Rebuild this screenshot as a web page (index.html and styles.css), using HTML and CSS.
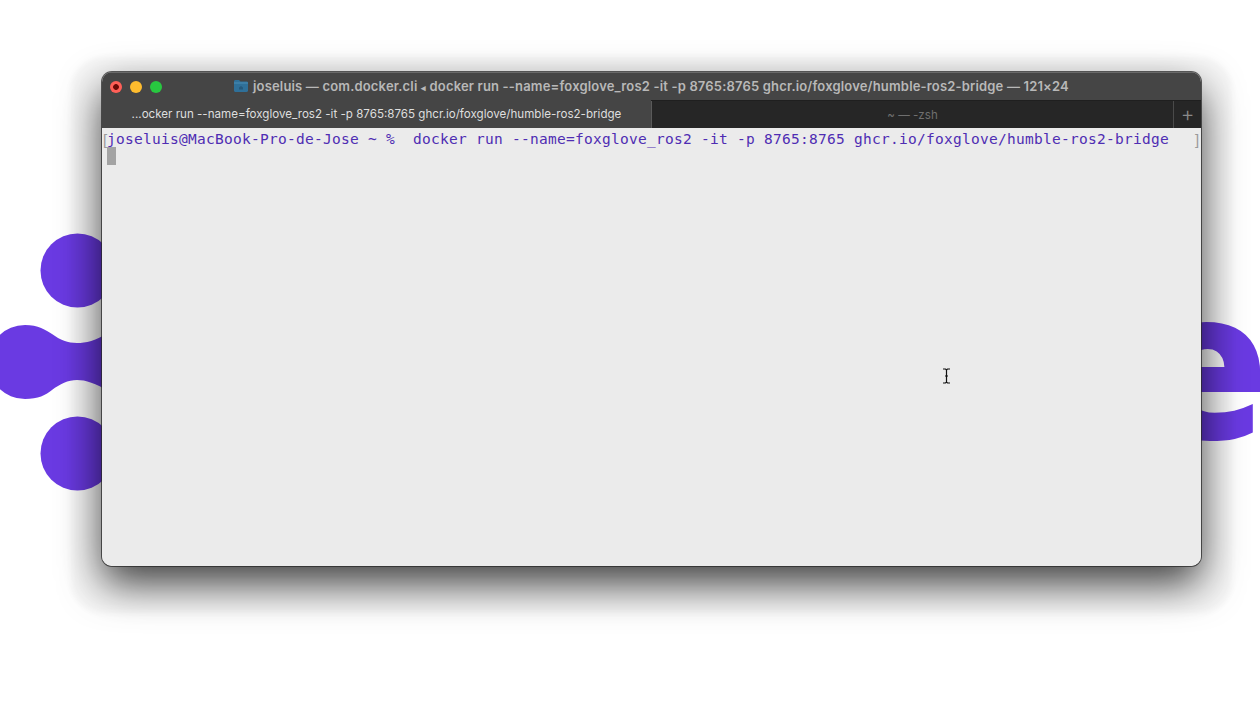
FILE: index.html
```html
<!DOCTYPE html>
<html lang="en">
<head>
<meta charset="utf-8">
<title>Terminal</title>
<link rel="stylesheet" href="styles.css">
</head>
<body>
<main class="stage">
  <svg class="logo-mark" width="110" height="720" viewBox="0 0 110 720" aria-hidden="true">
    <circle cx="77.500" cy="270.500" r="37"/>
    <circle cx="77.500" cy="453.500" r="37"/>
    <path d="M25 325C38 325 46 330 52 334C60 340 68 343 77 343C86 343 95 341 110 332V392C95 383 86 380 77 380C68 380 60 384 52 390C46 395 38 399 25 399A37 37 0 0 1 25 325Z"/>
  </svg>
  <div class="wordmark">foxglove</div>
  <section class="window">
    <header class="titlebar">
      <div class="lights">
        <span class="light light-close"></span>
        <span class="light light-min"></span>
        <span class="light light-max"></span>
      </div>
      <div class="title">
        <svg class="folder" width="16" height="14" viewBox="0 0 16 14" aria-hidden="true">
          <path d="M1 2.500C1 1.700 1.600 1 2.400 1H6L7.500 2.500H13.600C14.400 2.500 15 3.100 15 3.900V11.800C15 12.500 14.400 13 13.600 13H2.400C1.600 13 1 12.500 1 11.800Z" fill="#2f7099"/>
          <path d="M1 4H15" stroke="#4a8db5" stroke-width="1"/>
          <path d="M6 10.500V8.500L8 7L10 8.500V10.500Z" fill="#25597c"/>
        </svg>
        <span>joseluis — com.docker.cli <span class="tri">◂</span> docker run --name=foxglove_ros2 -it -p 8765:8765 ghcr.io/foxglove/humble-ros2-bridge — 121×24</span>
      </div>
    </header>
    <nav class="tabs">
      <div class="tab tab-active">...ocker run --name=foxglove_ros2 -it -p 8765:8765 ghcr.io/foxglove/humble-ros2-bridge</div>
      <div class="tab tab-idle">~ — -zsh</div>
      <div class="tab-add">+</div>
    </nav>
    <div class="terminal">
      <div class="row"><span class="mark">[</span><span class="command">joseluis@MacBook-Pro-de-Jose ~ %  docker run --name=foxglove_ros2 -it -p 8765:8765 ghcr.io/foxglove/humble-ros2-bridge</span><span class="mark mark-end">]</span></div>
      <div class="row"><span class="cursor"></span></div>
      <svg class="ibeam" width="9" height="16" viewBox="0 0 9 16" aria-hidden="true">
        <path d="M1 1H3.500L4.500 2L5.500 1H8M4.500 2V14M1 15H3.500L4.500 14L5.500 15H8M3 8H6" fill="none" stroke="#111" stroke-width="1.200"/>
      </svg>
    </div>
  </section>
</main>
</body>
</html>
```
FILE: styles.css
```css
* { box-sizing: border-box; }
html, body { margin: 0; height: 100%; background: #fff; }
.stage {
  position: relative;
  width: 1260px;
  height: 720px;
  overflow: hidden;
  padding: 72px 59px 0 102px;
}
.logo-mark { position: absolute; left: 0; top: 0; fill: #6a3ae2; }
.wordmark {
  position: absolute;
  right: 0;
  top: 256px;
  font: 800 207px/1 "Open Sans", "Liberation Sans", sans-serif;
  letter-spacing: -9px;
  color: #6a3ae2;
  white-space: nowrap;
}
.window {
  position: relative;
  width: 1099px;
  height: 494px;
  border-radius: 10px;
  overflow: hidden;
  box-shadow: 0 0 0 1px rgba(40,40,40,.75), 0 18px 42px rgba(0,0,0,.75), 0 16px 6px 31px rgba(0,0,0,.035);
  display: flex;
  flex-direction: column;
  font-family: Inter, "Liberation Sans", Arial, sans-serif;
}
.titlebar {
  height: 28px;
  flex: none;
  background: #454545;
  border-top: 1px solid #6a6a6a;
  display: flex;
  align-items: center;
  position: relative;
}
.lights { display: flex; gap: 8px; padding-left: 8px; }
.light { width: 12px; height: 12px; border-radius: 50%; }
.light-close { background: radial-gradient(circle, #6a0a06 0 2.500px, #ff5f57 3.200px); }
.light-min { background: #febc2e; }
.light-max { background: #28c840; }
.title {
  position: absolute;
  left: 131px;
  top: 0;
  bottom: 2px;
  display: flex;
  align-items: center;
  gap: 4px;
  font-size: 13px;
  font-weight: 600;
  letter-spacing: .17px;
  color: #b8b8b8;
  white-space: nowrap;
}
.tri { font-size: 9px; }
.tabs {
  height: 28px;
  flex: none;
  display: flex;
  font-size: 11.600px;
  white-space: nowrap;
  background: #262626;
  border-top: 1px solid #1f1f1f;
}
.tab { display: flex; align-items: center; justify-content: center; }
.tab-active {
  width: 549px;
  background: #454545;
  color: #dedede;
  margin-top: -1px;
}
.tab-idle {
  width: 522px;
  color: #6f6f6f;
  border-left: 1px solid #5a5a5a;
}
.tab-add {
  width: 28px;
  padding-bottom: 2px;
  border-left: 1px solid #4a4a4a;
  color: #8a8a8a;
  font-size: 21px;
  font-weight: 300;
  display: flex;
  align-items: center;
  justify-content: center;
}
.terminal {
  flex: 1;
  position: relative;
  background: #ebebeb;
  padding: 1px 1px 0;
  font: 14.500px/21px "DejaVu Sans Mono", monospace;
  letter-spacing: .27px;
  color: #4f2db3;
}
.row { height: 18px; display: flex; white-space: pre; }
.mark { width: 4px; color: #9a9a9a; font-family: "Liberation Sans", sans-serif; font-size: 15px; letter-spacing: 0; }
.mark-end { margin-left: auto; margin-right: 1px; }
.cursor { width: 9px; height: 18px; margin-left: 4px; background: #a3a3a3; }
.ibeam { position: absolute; left: 840px; top: 240px; }
```
